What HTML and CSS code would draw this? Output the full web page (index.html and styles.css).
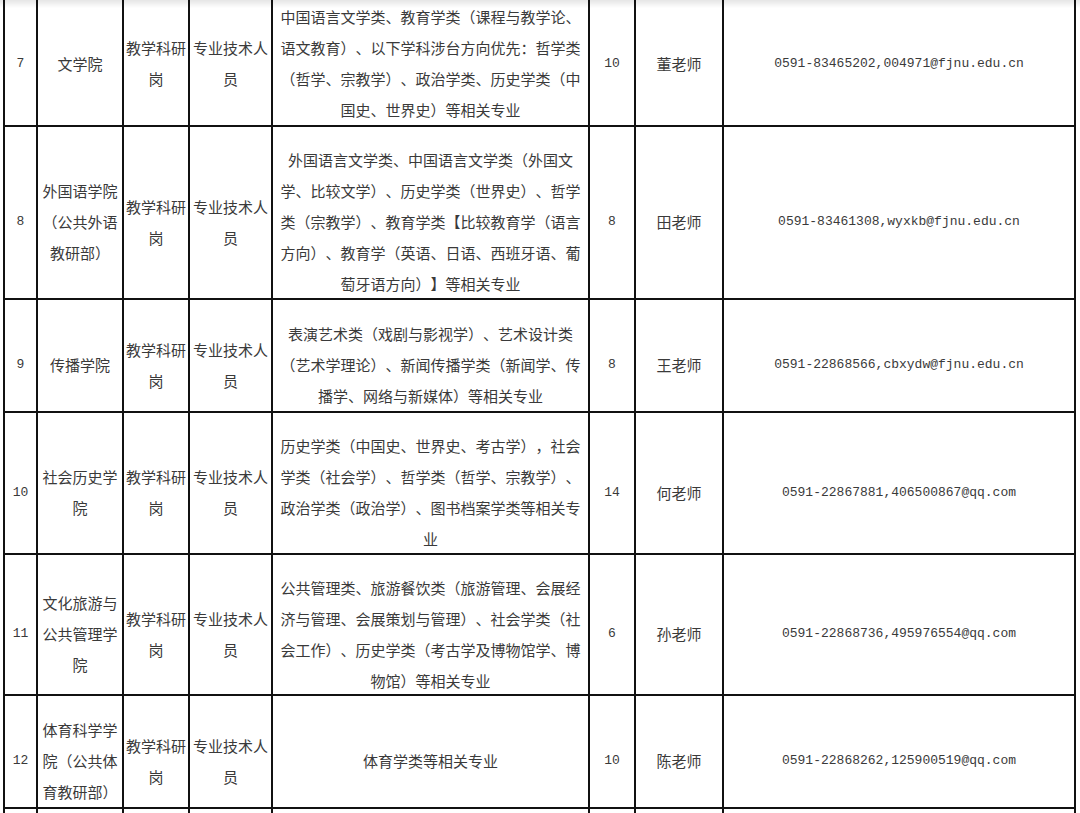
FILE: index.html
```html
<!DOCTYPE html>
<html lang="zh-CN">
<head>
<meta charset="utf-8">
<title>岗位表</title>
<link rel="stylesheet" href="styles.css">
</head>
<body>
<div class="shade"></div>
<div class="sheet">
  <div class="c num">7</div>
  <div class="c">文学院</div>
  <div class="c">教学科研<br>岗</div>
  <div class="c">专业技术人<br>员</div>
  <div class="c">中国语言文学类、教育学类（课程与教学论、<br>语文教育）、以下学科涉台方向优先：哲学类<br>（哲学、宗教学）、政治学类、历史学类（中<br>国史、世界史）等相关专业</div>
  <div class="c num">10</div>
  <div class="c">董老师</div>
  <div class="c mono">0591-83465202,004971@fjnu.edu.cn</div>

  <div class="c num">8</div>
  <div class="c">外国语学院<br>（公共外语<br>教研部）</div>
  <div class="c">教学科研<br>岗</div>
  <div class="c">专业技术人<br>员</div>
  <div class="c">外国语言文学类、中国语言文学类（外国文<br>学、比较文学）、历史学类（世界史）、哲学<br>类（宗教学）、教育学类【比较教育学（语言<br>方向）、教育学（英语、日语、西班牙语、葡<br>萄牙语方向）】等相关专业</div>
  <div class="c num">8</div>
  <div class="c">田老师</div>
  <div class="c mono">0591-83461308,wyxkb@fjnu.edu.cn</div>

  <div class="c num">9</div>
  <div class="c">传播学院</div>
  <div class="c">教学科研<br>岗</div>
  <div class="c">专业技术人<br>员</div>
  <div class="c">表演艺术类（戏剧与影视学）、艺术设计类<br>（艺术学理论）、新闻传播学类（新闻学、传<br>播学、网络与新媒体）等相关专业</div>
  <div class="c num">8</div>
  <div class="c">王老师</div>
  <div class="c mono">0591-22868566,cbxydw@fjnu.edu.cn</div>

  <div class="c num">10</div>
  <div class="c">社会历史学<br>院</div>
  <div class="c">教学科研<br>岗</div>
  <div class="c">专业技术人<br>员</div>
  <div class="c">历史学类（中国史、世界史、考古学），社会<br>学类（社会学）、哲学类（哲学、宗教学）、<br>政治学类（政治学）、图书档案学类等相关专<br>业</div>
  <div class="c num">14</div>
  <div class="c">何老师</div>
  <div class="c mono">0591-22867881,406500867@qq.com</div>

  <div class="c num">11</div>
  <div class="c">文化旅游与<br>公共管理学<br>院</div>
  <div class="c">教学科研<br>岗</div>
  <div class="c">专业技术人<br>员</div>
  <div class="c">公共管理类、旅游餐饮类（旅游管理、会展经<br>济与管理、会展策划与管理）、社会学类（社<br>会工作）、历史学类（考古学及博物馆学、博<br>物馆）等相关专业</div>
  <div class="c num">6</div>
  <div class="c">孙老师</div>
  <div class="c mono">0591-22868736,495976554@qq.com</div>

  <div class="c num">12</div>
  <div class="c">体育科学学<br>院（公共体<br>育教研部）</div>
  <div class="c">教学科研<br>岗</div>
  <div class="c">专业技术人<br>员</div>
  <div class="c">体育学类等相关专业</div>
  <div class="c num">10</div>
  <div class="c">陈老师</div>
  <div class="c mono">0591-22868262,125900519@qq.com</div>

  <div class="c"></div>
  <div class="c"></div>
  <div class="c"></div>
  <div class="c"></div>
  <div class="c"></div>
  <div class="c"></div>
  <div class="c"></div>
  <div class="c"></div>
</div>
</body>
</html>
```

FILE: styles.css
```css
html, body {
  margin: 0;
  padding: 0;
  background: #ffffff;
  overflow: hidden;
  height: 813px;
}

.shade {
  position: fixed;
  top: 0;
  left: 0;
  right: 0;
  height: 8px;
  background: linear-gradient(to bottom, rgba(0, 0, 0, 0.10), rgba(0, 0, 0, 0));
  pointer-events: none;
  z-index: 2;
}

.sheet {
  display: grid;
  grid-template-columns: 31px 84px 64px 81px 315px 44px 86px 350px;
  grid-template-rows: 142px 171px 111px 140px 139px 111px 60px;
  gap: 2px;
  padding: 2px;
  background: #111111;
  width: max-content;
  margin: -19px 0 0 3px;
}

.c {
  box-sizing: border-box;
  background: #ffffff;
  display: flex;
  align-items: center;
  justify-content: center;
  text-align: center;
  padding-top: 18px;
  font-family: "Noto Sans CJK SC", "Noto Sans", sans-serif;
  font-size: 15px;
  line-height: 31px;
  color: #3a3a3a;
  white-space: nowrap;
  overflow: hidden;
  text-spacing-trim: space-all;
}

.num,
.mono {
  font-family: "Liberation Mono", "DejaVu Sans Mono", monospace;
  font-size: 13px;
}
```
